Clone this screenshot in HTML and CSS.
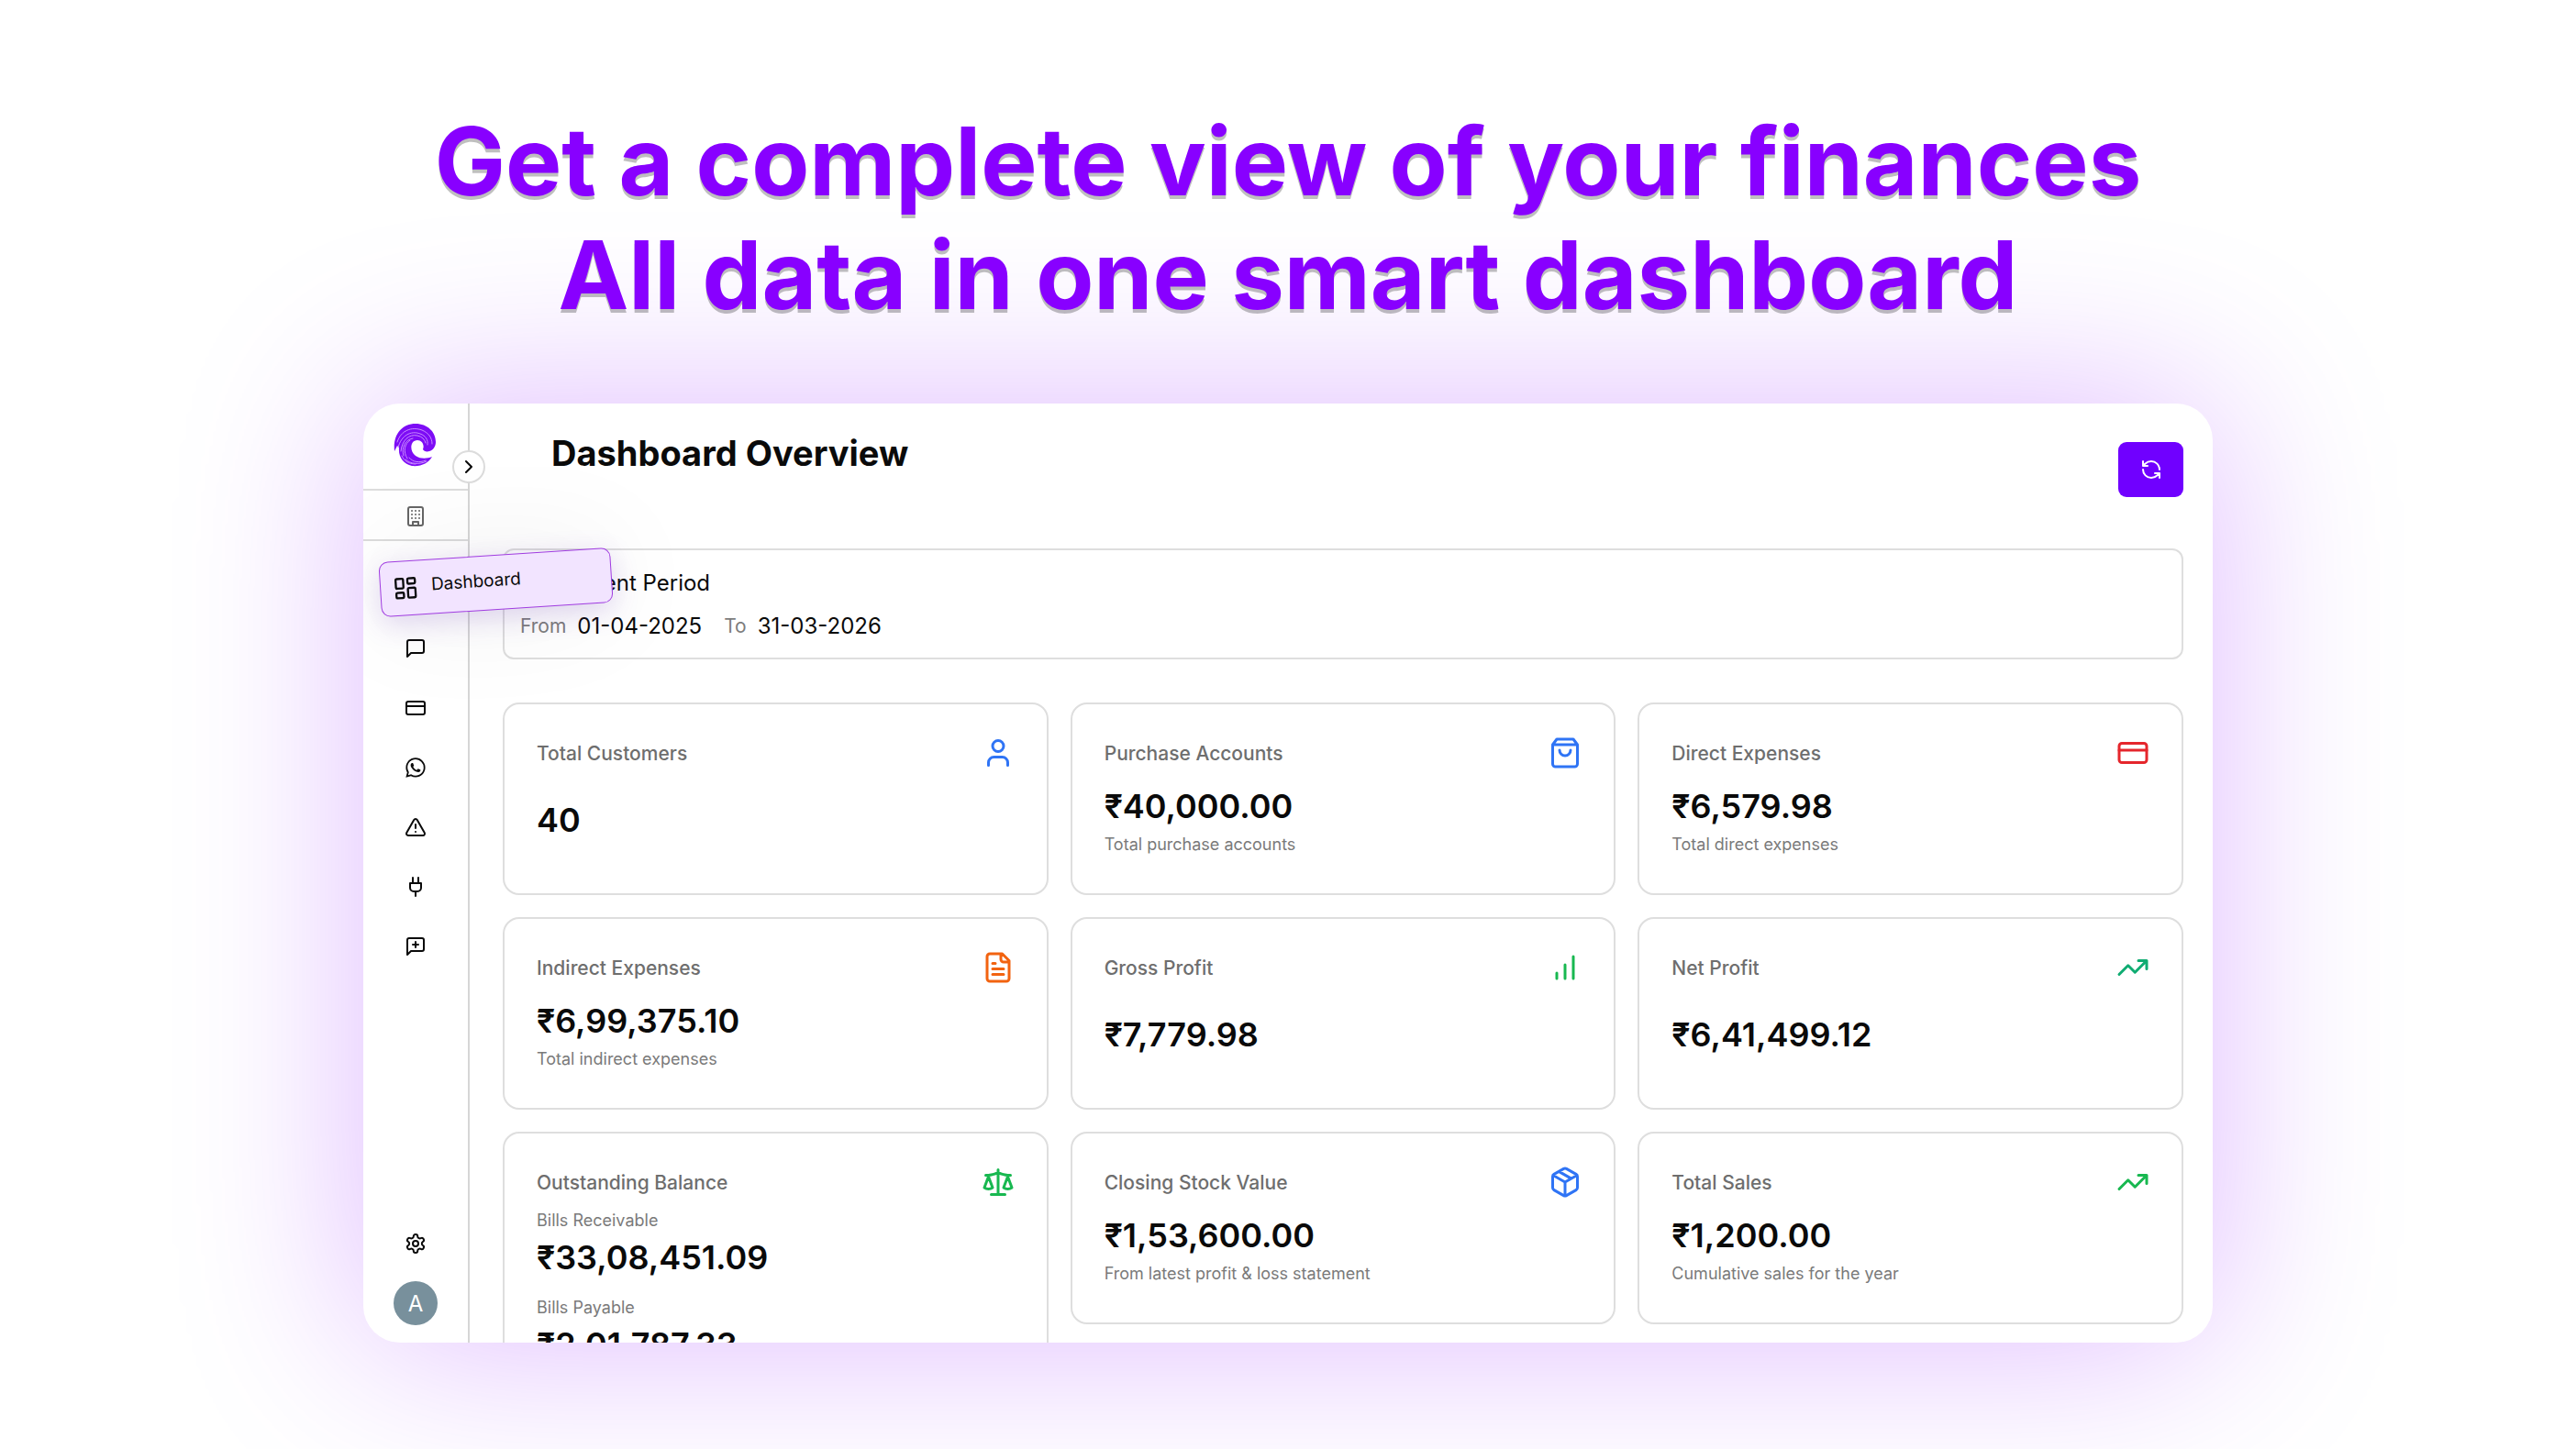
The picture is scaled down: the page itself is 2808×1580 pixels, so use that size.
FILE: index.html
```html
<!DOCTYPE html>
<html lang="en">
<head>
    <meta charset="UTF-8">
    <meta name="viewport" content="width=device-width, initial-scale=1.0">
    <title>Dashboard Overview</title>
    <link rel="stylesheet" href="styles.css">
</head>
<body>
    <div class="page">
        <h1 class="headline">Get a complete view of your finances<br>All data in one smart dashboard</h1>

        <div class="window">
            <aside class="sidebar">
                <div class="brand">
                    <svg class="logo" viewBox="0 0 48 48" aria-label="Logo">
                        <path fill="#7d0cf5" d="M1 31C-1 13 9 1 24 1c13 0 22 9 22 20 0 5-3 9-7 10-3 1-6 0-7-2 2-5-1-10-6-10-8 0-9 12-2 17 6 4 13 3 18 1-4 7-12 11-22 10C11 45 5 38 6 27l-2-2z"/>
                        <g fill="none" stroke="#c98bff" stroke-linecap="round">
                            <path d="M4 21C8 8 20 4 31 8c7 3 11 8 11 15"/>
                            <path d="M5 27C8 14 19 8 29 12c6 2 9 7 8 12"/>
                            <path d="M8 31c1-12 9-19 18-17 5 1 8 4 9 8"/>
                            <path d="M11 36c-3-9 2-18 10-19"/>
                            <path d="M15 39c-5-8-3-16 3-20"/>
                            <path d="M13 40c5 5 15 6 23 2"/>
                            <path d="M17 38c4 5 11 6 18 3"/>
                            <path d="M9 36c2 5 7 9 15 9"/>
                        </g>
                    </svg>
                    <button class="toggle" type="button" aria-label="Expand sidebar">
                        <svg class="icon" viewBox="0 0 24 24"><path d="m9 18 6-6-6-6"/></svg>
                    </button>
                </div>
                <button class="company" type="button" aria-label="Company">
                    <svg class="icon" viewBox="0 0 24 24"><rect x="4" y="2" width="16" height="20" rx="2"/><path d="M9 22v-4h6v4M8 6h.01M16 6h.01M12 6h.01M12 10h.01M12 14h.01M16 10h.01M16 14h.01M8 10h.01M8 14h.01"/></svg>
                </button>
                <nav class="menu">
                    <div class="menu-slot">
                        <a class="menu-active" href="#dashboard">
                            <svg class="icon" viewBox="0 0 24 24"><rect x="3" y="3" width="7" height="9" rx="1"/><rect x="14" y="3" width="7" height="5" rx="1"/><rect x="14" y="12" width="7" height="9" rx="1"/><rect x="3" y="16" width="7" height="5" rx="1"/></svg>
                            <span>Dashboard</span>
                        </a>
                    </div>
                    <a href="#chat" aria-label="Chat">
                        <svg class="icon" viewBox="0 0 24 24"><path d="M21 15a2 2 0 0 1-2 2H7l-4 4V5a2 2 0 0 1 2-2h14a2 2 0 0 1 2 2z"/></svg>
                    </a>
                    <a href="#payments" aria-label="Payments">
                        <svg class="icon" viewBox="0 0 24 24"><rect x="2" y="5" width="20" height="14" rx="2"/><path d="M2 10h20"/></svg>
                    </a>
                    <a href="#whatsapp" aria-label="WhatsApp">
                        <svg class="icon icon-solid" viewBox="-1 -1 18 18"><path d="M13.601 2.326A7.85 7.85 0 0 0 7.994 0C3.627 0 .068 3.558.064 7.926c0 1.399.366 2.76 1.057 3.965L0 16l4.204-1.102a7.9 7.9 0 0 0 3.79.965h.004c4.368 0 7.926-3.558 7.93-7.93A7.9 7.9 0 0 0 13.6 2.326zM7.994 14.521a6.6 6.6 0 0 1-3.356-.92l-.24-.144-2.494.654.666-2.433-.156-.251a6.56 6.56 0 0 1-1.007-3.505c0-3.626 2.957-6.584 6.591-6.584a6.56 6.56 0 0 1 4.66 1.931 6.56 6.56 0 0 1 1.928 4.66c-.004 3.639-2.961 6.592-6.592 6.592m3.615-4.934c-.197-.099-1.17-.578-1.353-.646-.182-.065-.315-.099-.445.099-.133.197-.513.646-.627.775-.114.133-.232.148-.43.05-.197-.1-.836-.308-1.592-.985-.59-.525-.985-1.175-1.103-1.372-.114-.198-.011-.304.088-.403.087-.088.197-.232.296-.346.1-.114.133-.198.198-.33.065-.134.034-.248-.015-.347-.05-.099-.445-1.076-.612-1.47-.16-.389-.323-.335-.445-.34-.114-.007-.247-.007-.38-.007a.73.73 0 0 0-.529.247c-.182.198-.691.677-.691 1.654s.71 1.916.81 2.049c.098.133 1.394 2.132 3.383 2.992.47.205.84.326 1.129.418.475.152.904.129 1.246.08.38-.058 1.171-.48 1.338-.943.164-.464.164-.86.114-.943-.049-.084-.182-.133-.38-.232"/></svg>
                    </a>
                    <a href="#alerts" aria-label="Alerts">
                        <svg class="icon" viewBox="0 0 24 24"><path d="m21.73 18-8-14a2 2 0 0 0-3.48 0l-8 14A2 2 0 0 0 4 21h16a2 2 0 0 0 1.73-3M12 9v4M12 17h.01"/></svg>
                    </a>
                    <a href="#integrations" aria-label="Integrations">
                        <svg class="icon" viewBox="0 0 24 24"><path d="M12 22v-5M9 8V2M15 8V2M18 8v5a4 4 0 0 1-4 4h-4a4 4 0 0 1-4-4V8Z"/></svg>
                    </a>
                    <a href="#feedback" aria-label="Feedback">
                        <svg class="icon" viewBox="0 0 24 24"><path d="M21 15a2 2 0 0 1-2 2H7l-4 4V5a2 2 0 0 1 2-2h14a2 2 0 0 1 2 2zM12 7v6M9 10h6"/></svg>
                    </a>
                </nav>
                <div class="sidebar-footer">
                    <a href="#settings" aria-label="Settings">
                        <svg class="icon" viewBox="0 0 24 24"><path d="M12.22 2h-.44a2 2 0 0 0-2 2v.18a2 2 0 0 1-1 1.73l-.43.25a2 2 0 0 1-2 0l-.15-.08a2 2 0 0 0-2.73.73l-.22.38a2 2 0 0 0 .73 2.73l.15.1a2 2 0 0 1 1 1.72v.51a2 2 0 0 1-1 1.74l-.15.09a2 2 0 0 0-.73 2.73l.22.38a2 2 0 0 0 2.73.73l.15-.08a2 2 0 0 1 2 0l.43.25a2 2 0 0 1 1 1.73V20a2 2 0 0 0 2 2h.44a2 2 0 0 0 2-2v-.18a2 2 0 0 1 1-1.73l.43-.25a2 2 0 0 1 2 0l.15.08a2 2 0 0 0 2.73-.73l.22-.39a2 2 0 0 0-.73-2.73l-.15-.08a2 2 0 0 1-1-1.74v-.5a2 2 0 0 1 1-1.74l.15-.09a2 2 0 0 0 .73-2.73l-.22-.38a2 2 0 0 0-2.73-.73l-.15.08a2 2 0 0 1-2 0l-.43-.25a2 2 0 0 1-1-1.73V4a2 2 0 0 0-2-2z"/><circle cx="12" cy="12" r="3"/></svg>
                    </a>
                    <button class="avatar" type="button">A</button>
                </div>
            </aside>

            <main class="content">
                <header class="topbar">
                    <h2>Dashboard Overview</h2>
                    <button class="refresh" type="button" aria-label="Refresh">
                        <svg class="icon" viewBox="0 0 24 24"><path d="M21 12a9 9 0 0 0-9-9 9.75 9.75 0 0 0-6.74 2.74L3 8M3 3v5h5M3 12a9 9 0 0 0 9 9 9.75 9.75 0 0 0 6.74-2.74L21 16M16 16h5v5"/></svg>
                    </button>
                </header>

                <section class="period">
                    <div class="period-title">
                        <svg class="icon" viewBox="0 0 24 24"><rect x="3" y="4" width="18" height="18" rx="2"/><path d="M8 2v4M16 2v4M3 10h18"/></svg>
                        <span>Current Period</span>
                    </div>
                    <div class="period-range">
                        <span class="muted">From</span>
                        <span>01-04-2025</span>
                        <span class="muted to">To</span>
                        <span>31-03-2026</span>
                    </div>
                </section>

                <section class="cards">
                    <article class="card">
                        <div class="card-head">
                            <h3>Total Customers</h3>
                            <svg class="icon blue" viewBox="0 0 24 24"><path d="M19 21v-2a4 4 0 0 0-4-4H9a4 4 0 0 0-4 4v2"/><circle cx="12" cy="7" r="4"/></svg>
                        </div>
                        <div class="card-body">
                            <p class="value">40</p>
                        </div>
                    </article>
                    <article class="card">
                        <div class="card-head">
                            <h3>Purchase Accounts</h3>
                            <svg class="icon blue" viewBox="0 0 24 24"><path d="M6 2 3 6v14a2 2 0 0 0 2 2h14a2 2 0 0 0 2-2V6l-3-4ZM3 6h18M16 10a4 4 0 0 1-8 0"/></svg>
                        </div>
                        <div class="card-body">
                            <p class="value">₹40,000.00</p>
                            <p class="note">Total purchase accounts</p>
                        </div>
                    </article>
                    <article class="card">
                        <div class="card-head">
                            <h3>Direct Expenses</h3>
                            <svg class="icon red" viewBox="0 0 24 24"><rect x="2" y="5" width="20" height="14" rx="2"/><path d="M2 10h20"/></svg>
                        </div>
                        <div class="card-body">
                            <p class="value">₹6,579.98</p>
                            <p class="note">Total direct expenses</p>
                        </div>
                    </article>
                    <article class="card">
                        <div class="card-head">
                            <h3>Indirect Expenses</h3>
                            <svg class="icon orange" viewBox="0 0 24 24"><path d="M15 2H6a2 2 0 0 0-2 2v16a2 2 0 0 0 2 2h12a2 2 0 0 0 2-2V7ZM14 2v4a2 2 0 0 0 2 2h4M10 9H8M16 13H8M16 17H8"/></svg>
                        </div>
                        <div class="card-body">
                            <p class="value">₹6,99,375.10</p>
                            <p class="note">Total indirect expenses</p>
                        </div>
                    </article>
                    <article class="card">
                        <div class="card-head">
                            <h3>Gross Profit</h3>
                            <svg class="icon green" viewBox="0 0 24 24"><path d="M12 20V10M18 20V4M6 20v-4"/></svg>
                        </div>
                        <div class="card-body">
                            <p class="value">₹7,779.98</p>
                        </div>
                    </article>
                    <article class="card">
                        <div class="card-head">
                            <h3>Net Profit</h3>
                            <svg class="icon teal" viewBox="0 0 24 24"><path d="m22 7-8.5 8.5-5-5L2 17M16 7h6v6"/></svg>
                        </div>
                        <div class="card-body">
                            <p class="value">₹6,41,499.12</p>
                        </div>
                    </article>
                    <article class="card">
                        <div class="card-head">
                            <h3>Outstanding Balance</h3>
                            <svg class="icon green" viewBox="0 0 24 24"><path d="m16 16 3-8 3 8c-.87.65-1.92 1-3 1s-2.13-.35-3-1ZM2 16l3-8 3 8c-.87.65-1.92 1-3 1s-2.13-.35-3-1ZM7 21h10M12 3v18M3 7h2c2 0 5-1 7-2 2 1 5 2 7 2h2"/></svg>
                        </div>
                        <div class="card-body balances">
                            <div>
                                <p class="note">Bills Receivable</p>
                                <p class="value">₹33,08,451.09</p>
                            </div>
                            <div>
                                <p class="note">Bills Payable</p>
                                <p class="value">₹2,01,787.33</p>
                            </div>
                        </div>
                    </article>
                    <article class="card">
                        <div class="card-head">
                            <h3>Closing Stock Value</h3>
                            <svg class="icon blue" viewBox="0 0 24 24"><path d="m7.5 4.27 9 5.15M21 8a2 2 0 0 0-1-1.73l-7-4a2 2 0 0 0-2 0l-7 4A2 2 0 0 0 3 8v8a2 2 0 0 0 1 1.73l7 4a2 2 0 0 0 2 0l7-4A2 2 0 0 0 21 16ZM3.3 7l8.7 5 8.7-5M12 22V12"/></svg>
                        </div>
                        <div class="card-body">
                            <p class="value">₹1,53,600.00</p>
                            <p class="note">From latest profit &amp; loss statement</p>
                        </div>
                    </article>
                    <article class="card">
                        <div class="card-head">
                            <h3>Total Sales</h3>
                            <svg class="icon green" viewBox="0 0 24 24"><path d="m22 7-8.5 8.5-5-5L2 17M16 7h6v6"/></svg>
                        </div>
                        <div class="card-body">
                            <p class="value">₹1,200.00</p>
                            <p class="note">Cumulative sales for the year</p>
                        </div>
                    </article>
                </section>
            </main>
        </div>
    </div>
</body>
</html>
```
FILE: styles.css
```css
* {
    box-sizing: border-box;
}

body {
    margin: 0;
    font-family: Inter, "Liberation Sans", sans-serif;
    color: #0a0a0a;
    background: #fff;
}

h1, h2, h3, p {
    margin: 0;
}

a {
    color: inherit;
    text-decoration: none;
}

button {
    padding: 0;
    border: none;
    background: none;
    font-family: inherit;
    cursor: pointer;
}

.page {
    display: flex;
    flex-direction: column;
    gap: 78px;
    height: 100vh;
    padding: 114px 396px 116px;
    overflow: hidden;
}

.headline {
    font-size: 103px;
    line-height: 124px;
    font-weight: 700;
    text-align: center;
    white-space: nowrap;
    color: #8800ff;
    text-shadow: 0 4px 0 rgba(0, 0, 0, 0.25);
    align-self: center;
    position: relative;
    z-index: 1;
}

.window {
    flex: 1;
    min-height: 0;
    display: flex;
    overflow: hidden;
    background: #fff;
    border-radius: 40px;
    box-shadow: 0 0 200px rgba(136, 0, 255, 0.28);
}

.icon {
    width: 24px;
    height: 24px;
    flex: none;
    display: block;
    fill: none;
    stroke: currentColor;
    stroke-width: 2;
    stroke-linecap: round;
    stroke-linejoin: round;
}

.icon-solid {
    fill: currentColor;
    stroke: none;
}

/* Sidebar */
.sidebar {
    position: relative;
    z-index: 2;
    flex: none;
    width: 116px;
    display: flex;
    flex-direction: column;
    border-right: 2px solid #d6d6d6;
}

.brand {
    position: relative;
    display: flex;
    justify-content: center;
    height: 95px;
    padding-top: 21px;
    border-bottom: 2px solid #dcdcdc;
}

.logo {
    width: 48px;
    height: 48px;
}

.toggle {
    position: absolute;
    right: -19px;
    top: 51px;
    width: 36px;
    height: 36px;
    display: flex;
    align-items: center;
    justify-content: center;
    border: 2px solid #dcdcdc;
    border-radius: 50%;
    background: #fff;
    color: #0a0a0a;
}

.company {
    display: flex;
    align-items: center;
    justify-content: center;
    height: 55px;
    padding-top: 3px;
    border-bottom: 2px solid #dcdcdc;
    color: #666;
}

.menu {
    flex: 1;
    padding-top: 19px;
}

.menu > *,
.sidebar-footer a {
    display: flex;
    align-items: center;
    justify-content: center;
    height: 65px;
}

.menu-slot {
    position: relative;
}

.menu-active {
    position: absolute;
    left: 18px;
    top: -4px;
    width: 253px;
    height: 60px;
    padding-left: 13px;
    display: flex;
    align-items: center;
    gap: 14px;
    font-size: 19px;
    line-height: 24px;
    background: #f2e4ff;
    border: 1px solid #a03ce0;
    border-radius: 10px;
    box-shadow: 0 8px 30px rgba(110, 60, 190, 0.2), 0 0 120px rgba(0, 0, 0, 0.08);
    transform: rotate(-3.7deg);
}

.menu-active .icon {
    width: 28px;
    height: 28px;
}

.menu-active span {
    padding-bottom: 4px;
}

.sidebar-footer {
    display: flex;
    flex-direction: column;
    align-items: center;
    gap: 9px;
    padding-bottom: 19px;
}

.avatar {
    width: 48px;
    height: 48px;
    border-radius: 50%;
    background: #78909c;
    color: #fff;
    font-size: 24px;
}

/* Main area */
.content {
    flex: 1;
    min-width: 0;
    padding: 30px 32px 0 36px;
}

.topbar {
    display: flex;
    align-items: flex-start;
    justify-content: space-between;
    padding-left: 53px;
    margin-bottom: 56px;
}

.topbar h2 {
    font-size: 38px;
    line-height: 48px;
    font-weight: 700;
}

.refresh {
    width: 71px;
    height: 60px;
    margin-top: 12px;
    display: flex;
    align-items: center;
    justify-content: center;
    background: #7000ff;
    border-radius: 9px;
    color: #fff;
}

.period {
    display: flex;
    flex-direction: column;
    gap: 15px;
    padding: 20px 17px 18px;
    margin-bottom: 47px;
    border: 2px solid #dedede;
    border-radius: 12px;
    font-size: 24px;
    line-height: 32px;
}

.period-title,
.period-range {
    display: flex;
    align-items: center;
    gap: 12px;
}

.period-title {
    gap: 17px;
}

.muted {
    font-size: 21px;
    color: #7d7d7d;
}

.period-range .to {
    margin-left: 12px;
}

.cards {
    display: grid;
    grid-template-columns: repeat(3, 1fr);
    gap: 24px;
    align-items: start;
}

.card {
    min-height: 210px;
    display: flex;
    flex-direction: column;
    padding: 35px;
    border: 2px solid #dedede;
    border-radius: 18px;
}

.card-head {
    display: flex;
    align-items: center;
    justify-content: space-between;
    margin-bottom: 10px;
}

.card-head h3 {
    padding-top: 2px;
    font-size: 21px;
    line-height: 30px;
    font-weight: 500;
    color: #6e6e6e;
}

.card-head .icon {
    width: 36px;
    height: 36px;
}

.card-body {
    flex: 1;
    display: flex;
    flex-direction: column;
    justify-content: center;
    gap: 6px;
}

.value {
    font-size: 36px;
    line-height: 48px;
    font-weight: 600;
}

.note {
    font-size: 18px;
    line-height: 24px;
    color: #7a7a7a;
}

.balances {
    gap: 19px;
    padding-top: 2px;
}

.balances .value {
    margin-top: 4px;
}

.blue {
    color: #2f74f5;
}

.red {
    color: #e5262c;
}

.orange {
    color: #f26310;
}

.green {
    color: #18b850;
}

.teal {
    color: #10ac72;
}
```
